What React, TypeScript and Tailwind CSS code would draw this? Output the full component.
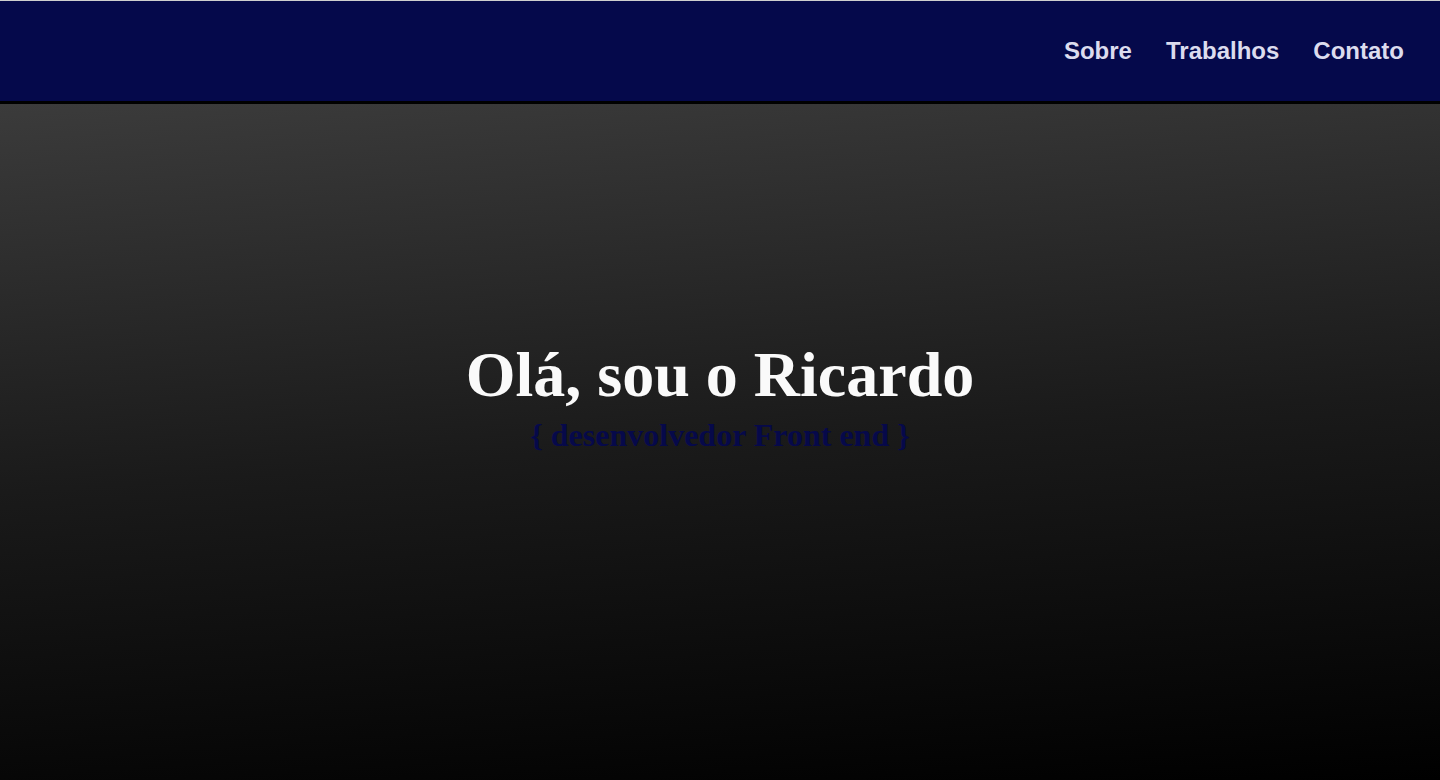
export default function App() {
  return (
    <div className="flex flex-col h-[780px] w-full overflow-hidden bg-black">
      <header className="h-[104px] shrink-0 flex items-center justify-end bg-[#05094b] border-t border-t-[#cfcfcf] border-b-[3px] border-b-black pr-[36px]">
        <nav>
          <ul className="flex flex-row gap-[34px] font-['Liberation_Sans',Arial,sans-serif] text-[24px] font-bold text-[#dcdcee]">
            <li>
              <a href="#sobre">Sobre</a>
            </li>
            <li>
              <a href="#trabalhos">Trabalhos</a>
            </li>
            <li>
              <a href="#contato">Contato</a>
            </li>
          </ul>
        </nav>
      </header>

      <main className="flex-1 flex flex-col items-center justify-center pb-[90px] bg-[linear-gradient(176deg,#3b3b3b_0%,#1a1a1a_50%,#000_100%)] font-['Liberation_Serif','Times_New_Roman',serif]">
        <h1 className="text-[64px] font-bold text-[#fafafa] leading-[1.107]">Olá, sou o Ricardo</h1>
        <h2 className="mt-[7px] text-[32px] font-bold text-[#06094a] leading-[1.107]">
          {"{ desenvolvedor Front end }"}
        </h2>
      </main>
    </div>
  );
}
